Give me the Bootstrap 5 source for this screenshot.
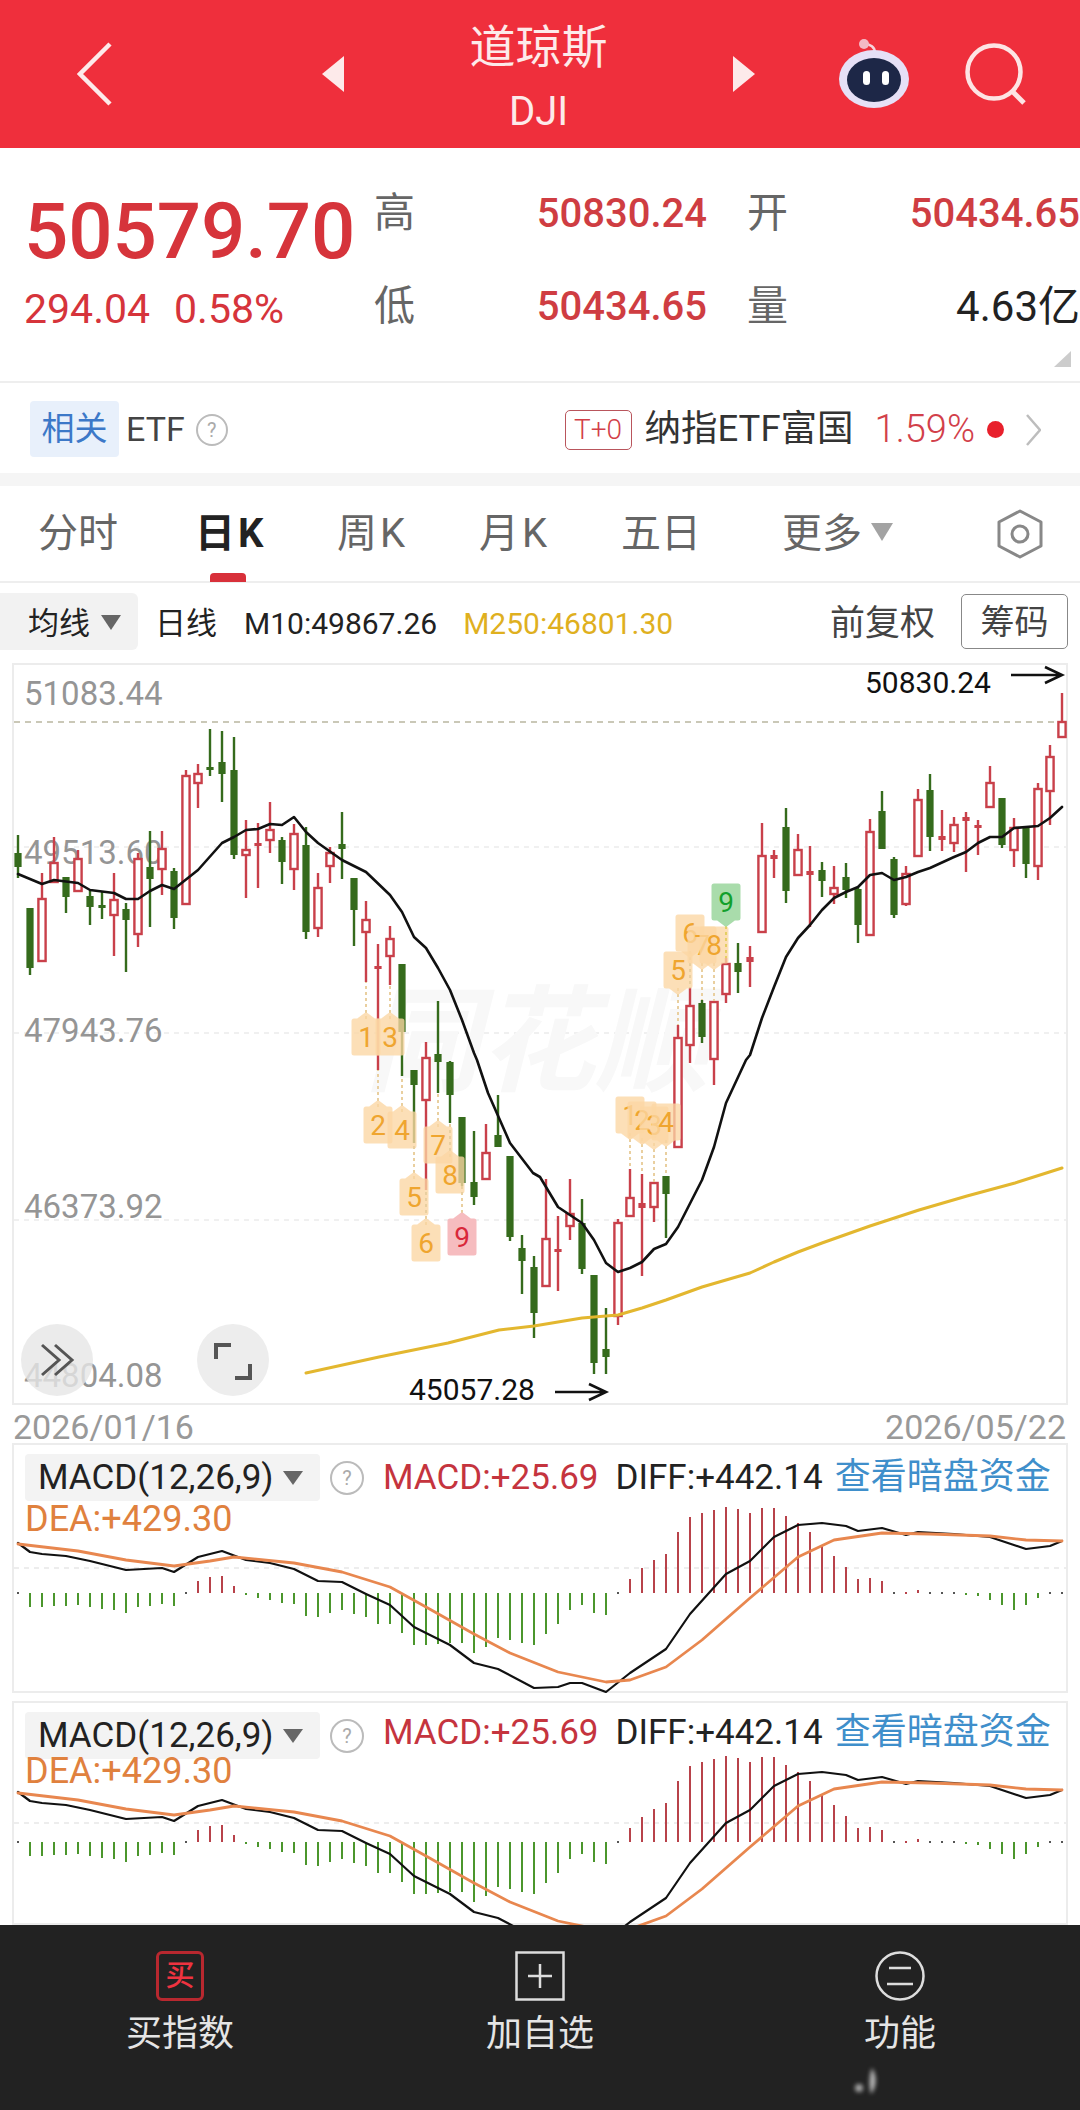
<!DOCTYPE html>
<html lang="zh-CN">
<head>
    <meta charset="UTF-8">
    <title>道琼斯 DJI</title>
    <meta name="viewport" content="width=device-width, initial-scale=1.0"/>
    <link href="https://cdn.jsdelivr.net/npm/bootstrap@5.3.0/dist/css/bootstrap.min.css" rel="stylesheet">
    <script src="https://cdn.jsdelivr.net/npm/bootstrap@5.3.3/dist/js/bootstrap.bundle.min.js"></script>
    <style>
        html, body { margin: 0; background: #fff; }
        body {
            width: 1080px;
            height: 2110px;
            overflow: hidden;
            font-family: Roboto, "Noto Sans CJK SC", sans-serif;
            color: #333;
        }
        .top-bar { height: 148px; background: #ef2f3c; color: #fdeaea; }
        .top-bar svg { flex: none; display: block; }
        .back-ico { margin-left: 77px; }
        .prev-ico { margin-left: 210px; }
        .robot-ico { margin-left: 83px; }
        .search-ico { margin-left: 55px; margin-right: 53px; }
        .title-main { font-size: 46px; line-height: 50px; margin-top: 7px; }
        .title-sub { font-size: 40px; line-height: 44px; margin-top: 18px; }

        .quote-wrap { height: 235px; border-bottom: 2px solid #eee; padding-top: 19px; }
        .price-col { width: 374px; padding-left: 24px; color: #d6343b; }
        .price-big { font-size: 78px; line-height: 92px; font-weight: 500; margin-top: 19px; letter-spacing: -.1px; }
        .price-sub { font-size: 41px; line-height: 46px; margin-top: 8px; }
        .price-sub span + span { margin-left: 24px; }
        .stat-grid {
            display: grid;
            grid-template-columns: 41px 292px 78px 295px;
            grid-auto-rows: 93px;
            align-items: center;
            font-size: 41px;
            color: #666;
            white-space: nowrap;
        }
        .stat-grid .val { text-align: right; color: #cf3d42; font-size: 40px; font-weight: 500; }
        .stat-grid .k2 { padding-left: 40px; }
        .stat-grid .dark { color: #222; font-weight: 400; font-size: 42px; }
        .corner-tri {
            right: 9px;
            bottom: 14px;
            border-style: solid;
            border-width: 0 0 16px 17px;
            border-color: transparent transparent #ccc transparent;
        }

        .etf-row { height: 90px; padding: 3px 39px 0 30px; font-size: 34px; color: #444; }
        .tag-rel {
            width: 89px; height: 56px; margin-right: 7px; margin-top: -2px; border-radius: 4px;
            background: #e8f0fb; color: #3c78c8; font-size: 33px;
        }
        .help-dot {
            width: 32px; height: 32px; border-radius: 50%;
            border: 2px solid #bbb; color: #aaa;
            font-size: 20px; line-height: 1;
        }
        .etf-row .help-dot { margin-left: 11px; }
        .tag-t0 {
            width: 67px; height: 40px; border: 1px solid #b9555c; border-radius: 5px;
            color: #d24048; font-size: 28px; font-weight: 300; margin-right: 13px;
        }
        .etf-name { font-size: 36.5px; color: #333; }
        .etf-pct { font-size: 38px; color: #d2404a; margin-left: 21px; font-weight: 300; }
        .etf-dot { width: 17px; height: 17px; border-radius: 50%; background: #e8202c; margin-left: 12px; }
        .etf-row svg { margin-left: 22px; }
        .gap-band { height: 13px; background: #f5f5f5; }

        .tab-bar { height: 97px; border-bottom: 2px solid #eee; padding-left: 38px; font-size: 40px; color: #666; }
        .tab-item { position: relative; width: 142px; line-height: 96px; white-space: nowrap; }
        .tab-first { width: 157px; }
        .tab-wide { width: 161px; }
        .tab-k { letter-spacing: 3px; }
        .tab-on { font-weight: 700; color: #222; }
        .tab-on::after {
            content: "";
            position: absolute;
            left: 15px; bottom: 0;
            width: 36px; height: 9px;
            border-radius: 4px 4px 0 0;
            background: #d8303a;
        }
        .tri-down {
            display: inline-block;
            border-style: solid;
            border-color: #a3a3a3 transparent transparent transparent;
        }
        .tri-more { border-width: 18px 11px 0 11px; margin-left: 9px; vertical-align: 6px; }

        .tool-bar { height: 80px; padding: 10px 12px 13px 0; font-size: 31px; color: #222; white-space: nowrap; }
        .ma-chip { width: 138px; height: 57px; padding: 5px 0 0 28px; background: #f2f2f2; border-radius: 0 6px 6px 0; }
        .ma-chip .tri-down { border-width: 15px 10px 0 10px; border-top-color: #666; margin-left: 11px; margin-top: -3px; }
        .ma-day { margin-left: 17px; padding-top: 5px; }
        .ma-10 { margin-left: 27px; font-size: 30px; padding-top: 3px; }
        .ma-250 { margin-left: 26px; font-size: 30px; color: #dfb01f; padding-top: 3px; }
        .fq-label { font-size: 35px; color: #444; margin-right: 26px; padding-top: 5px; }
        .chip-btn {
            width: 107px; height: 55px; padding: 0;
            border: 1px solid #888; border-radius: 5px;
            font-size: 34px; line-height: 1; color: #444;
        }

        .chart-box {
            position: relative;
            width: 1056px;
            margin-left: 12px;
            overflow: hidden;
            box-shadow: inset 0 0 0 2px #ececec;
        }
        .chart-box svg { display: block; }
        .main-box { height: 742px; }
        .macd-a { height: 250px; }
        .macd-b { height: 224px; margin-top: 8px; }
        .axis-txt { font-size: 33px; fill: #959595; }
        .mark-txt { font-size: 30px; fill: #111; }
        .seq-txt { font-size: 28px; text-anchor: middle; }
        .wm-txt { font-size: 115px; font-weight: 700; font-style: italic; fill: #f8f8f8; }

        .date-row { height: 38px; padding: 0 14px 0 13px; font-size: 34px; line-height: 44px; color: #999; }

        .macd-legend { position: absolute; left: 13px; top: 11px; right: 0; }
        .macd-head { font-size: 35px; line-height: 47px; height: 47px; white-space: nowrap; }
        .macd-chip { flex: none; width: 295px; height: 47px; padding-left: 13px; background: #f3f3f3; border-radius: 4px; color: #222; }
        .macd-chip .tri-down { border-width: 14px 10px 0 10px; border-top-color: #666; margin-left: 9px; }
        .macd-head .help-dot { flex: none; margin-left: 10px; width: 34px; height: 34px; }
        .v-macd { color: #c5343e; margin-left: 19px; }
        .v-diff { color: #222; margin-left: 17px; }
        .v-link { color: #3f8fcb; font-size: 36px; margin-left: 12px; }
        .v-dea { color: #e0813e; font-size: 36px; line-height: 40px; margin-top: -2px; }
        .macd-b .v-dea { margin-top: -8px; }
        .macd-b .macd-head > span:not(.macd-chip):not(.help-dot) { margin-top: -6px; }

        .foot-bar { position: relative; height: 185px; background: #222; color: #e5e5e5; font-size: 36px; }
        .foot-item { width: 360px; padding-top: 26px; }
        .foot-ico { width: 50px; height: 50px; display: block; }
        .foot-buy {
            width: 48px; height: 50px; border: 3px solid #b8282f; border-radius: 6px;
            color: #ef3340; font-size: 29px; font-weight: 500; line-height: 1;
        }
        .foot-label { line-height: 44px; margin-top: 11px; }
        .foot-mark { position: absolute; left: 855px; top: 143px; filter: blur(2px); }
    </style>
</head>
<body>

<!-- Top bar -->
<header class="top-bar d-flex align-items-center">
    <svg class="back-ico" width="35" height="64" viewBox="0 0 35 64"><path d="M33 2 3 32l30 30" fill="none" stroke="#fdeaea" stroke-width="4.5"/></svg>
    <svg class="prev-ico" width="22" height="36" viewBox="0 0 22 36"><path d="M22 0V36L0 18Z" fill="#fdeaea"/></svg>
    <div class="flex-grow-1 text-center">
        <div class="title-main">道琼斯</div>
        <div class="title-sub">DJI</div>
    </div>
    <svg width="22" height="36" viewBox="0 0 22 36"><path d="M0 0V36L22 18Z" fill="#fdeaea"/></svg>
    <svg class="robot-ico" width="72" height="70" viewBox="0 0 72 70">
        <path d="M37 14C37 8 32 5 27 5" fill="none" stroke="#f6d3dc" stroke-width="2.5"/>
        <circle cx="26" cy="5" r="5" fill="#f3b9c6"/>
        <ellipse cx="36" cy="40" rx="35" ry="29" fill="#e6e0f6"/>
        <ellipse cx="36" cy="41" rx="27" ry="22" fill="#1d2747"/>
        <rect x="25" y="32" width="7" height="14" rx="3.5" fill="#fff"/>
        <rect x="44" y="32" width="7" height="14" rx="3.5" fill="#fff"/>
    </svg>
    <svg class="search-ico" width="62" height="62" viewBox="0 0 62 62"><circle cx="29" cy="29" r="26.5" fill="none" stroke="#fde4e4" stroke-width="4.5"/><path d="M47 48 59 60" stroke="#fde4e4" stroke-width="5"/></svg>
</header>

<!-- Quote -->
<section class="quote-wrap d-flex position-relative">
    <div class="price-col">
        <div class="price-big">50579.70</div>
        <div class="price-sub"><span>294.04</span><span>0.58%</span></div>
    </div>
    <div class="stat-grid">
        <span>高</span><span class="val">50830.24</span><span class="k2">开</span><span class="val">50434.65</span>
        <span>低</span><span class="val">50434.65</span><span class="k2">量</span><span class="val dark">4.63亿</span>
    </div>
    <span class="corner-tri position-absolute"></span>
</section>

<!-- Related ETF -->
<section class="etf-row d-flex align-items-center">
    <span class="tag-rel d-flex align-items-center justify-content-center">相关</span>
    <span>ETF</span>
    <span class="help-dot d-inline-flex align-items-center justify-content-center">?</span>
    <span class="tag-t0 d-flex align-items-center justify-content-center ms-auto">T+0</span>
    <span class="etf-name">纳指ETF富国</span>
    <span class="etf-pct">1.59%</span>
    <span class="etf-dot"></span>
    <svg width="15" height="32" viewBox="0 0 15 32"><path d="M1 1 14 16 1 31" fill="none" stroke="#bdbdbd" stroke-width="2.5"/></svg>
</section>
<div class="gap-band"></div>

<!-- Period tabs -->
<nav class="tab-bar d-flex align-items-start">
    <span class="tab-item tab-first">分时</span>
    <span class="tab-item tab-k tab-on">日K</span>
    <span class="tab-item tab-k">周K</span>
    <span class="tab-item tab-k">月K</span>
    <span class="tab-item tab-wide">五日</span>
    <span class="tab-item">更多<i class="tri-down tri-more"></i></span>
    <svg class="ms-auto" style="margin:23px 36px 0 0" width="48" height="50" viewBox="0 0 48 50"><path d="M24 2 45 13V37L24 48 3 37V13Z" fill="none" stroke="#888" stroke-width="3" stroke-linejoin="round"/><circle cx="24" cy="25" r="8" fill="none" stroke="#888" stroke-width="3"/></svg>
</nav>

<!-- Chart toolbar -->
<div class="tool-bar d-flex align-items-center">
    <span class="ma-chip d-flex align-items-center">均线<i class="tri-down"></i></span>
    <span class="ma-day">日线</span>
    <span class="ma-10">M10:49867.26</span>
    <span class="ma-250">M250:46801.30</span>
    <span class="fq-label ms-auto">前复权</span>
    <button type="button" class="btn chip-btn">筹码</button>
</div>

<!-- Main K chart -->
<div class="chart-box main-box">
    <svg id="klineChart" width="1056" height="742" viewBox="12 663 1056 742" xmlns="http://www.w3.org/2000/svg"></svg>
</div>
<div class="date-row d-flex justify-content-between">
    <span>2026/01/16</span>
    <span>2026/05/22</span>
</div>

<!-- MACD panels -->
<div class="chart-box macd-a">
    <svg id="macdOne" width="1056" height="250" viewBox="12 1443 1056 250" xmlns="http://www.w3.org/2000/svg"></svg>
    <div class="macd-legend">
        <div class="macd-head d-flex align-items-center">
            <span class="macd-chip d-flex align-items-center">MACD(12,26,9)<i class="tri-down"></i></span>
            <span class="help-dot d-inline-flex align-items-center justify-content-center">?</span>
            <span class="v-macd">MACD:+25.69</span>
            <span class="v-diff">DIFF:+442.14</span>
            <span class="v-link">查看暗盘资金</span>
        </div>
        <div class="v-dea">DEA:+429.30</div>
    </div>
</div>
<div class="chart-box macd-b">
    <svg id="macdTwo" width="1056" height="224" viewBox="12 1701 1056 224" xmlns="http://www.w3.org/2000/svg"></svg>
    <div class="macd-legend">
        <div class="macd-head d-flex align-items-center">
            <span class="macd-chip d-flex align-items-center">MACD(12,26,9)<i class="tri-down"></i></span>
            <span class="help-dot d-inline-flex align-items-center justify-content-center">?</span>
            <span class="v-macd">MACD:+25.69</span>
            <span class="v-diff">DIFF:+442.14</span>
            <span class="v-link">查看暗盘资金</span>
        </div>
        <div class="v-dea">DEA:+429.30</div>
    </div>
</div>

<!-- Bottom actions -->
<footer class="foot-bar d-flex">
    <div class="foot-item d-flex flex-column align-items-center">
        <span class="foot-buy d-flex align-items-center justify-content-center">买</span>
        <span class="foot-label">买指数</span>
    </div>
    <div class="foot-item d-flex flex-column align-items-center">
        <svg class="foot-ico" viewBox="0 0 50 50"><rect x="1.5" y="1.5" width="47" height="47" fill="none" stroke="#ddd" stroke-width="2.5"/><path d="M25 13V37M13 25H37" stroke="#ddd" stroke-width="2.5"/></svg>
        <span class="foot-label">加自选</span>
    </div>
    <div class="foot-item d-flex flex-column align-items-center">
        <svg class="foot-ico" viewBox="0 0 50 50"><circle cx="25" cy="25" r="23.5" fill="none" stroke="#ddd" stroke-width="2.5"/><path d="M14 17H36M12 33H38" stroke="#ddd" stroke-width="2.5"/></svg>
        <span class="foot-label">功能</span>
    </div>
    <svg class="foot-mark" width="30" height="28" viewBox="0 0 30 28"><circle cx="4" cy="20" r="4" fill="#aaa"/><path d="M17 0C22 8 22 18 16 26 14 18 14 8 17 0Z" fill="#bbb"/></svg>
</footer>

<script>
    const NS = 'http://www.w3.org/2000/svg';
    const RED = '#c9404a';
    const GREEN = '#356b1c';

    function add(svg, tag, attrs, text) {
        const el = document.createElementNS(NS, tag);
        Object.keys(attrs).forEach(k => el.setAttribute(k, attrs[k]));
        if (text !== undefined) el.textContent = text;
        svg.appendChild(el);
        return el;
    }

    function polyline(svg, pts, color, width) {
        add(svg, 'polyline', {
            points: pts.map(p => p[0].toFixed(1) + ',' + p[1].toFixed(1)).join(' '),
            fill: 'none', stroke: color, 'stroke-width': width,
            'stroke-linejoin': 'round', 'stroke-linecap': 'round'
        });
    }

    // [up?, high, bodyTop, bodyBottom, low], one per trading day, 12px apart
    const candles = [
        [0,835,853,867,878],[0,908,908,968,975],[1,873,898,962,962],[1,837,862,883,883],[0,877,877,897,913],
        [1,850,858,892,892],[0,891,896,907,925],[0,892,905,906,919],[1,873,899,916,956],[0,903,909,920,972],
        [1,853,858,935,947],[0,831,867,879,927],[1,831,848,870,895],[0,868,871,918,929],[1,770,775,905,905],
        [1,764,773,784,808],[0,729,767,769,776],[0,731,762,774,802],[0,737,770,855,859],[1,820,849,856,898],
        [1,823,843,846,888],[1,802,829,841,853],[0,837,840,862,884],[1,824,833,870,890],[0,827,845,932,939],
        [1,873,887,929,937],[1,847,852,867,883],[0,812,844,849,879],[0,878,878,910,946],[1,901,919,933,982],
        [1,944,966,968,1070],[1,926,938,957,985],[0,964,964,1032,1076],[0,1070,1070,1085,1143],[1,1042,1057,1101,1190],
        [0,1001,1054,1062,1093],[0,1061,1062,1095,1123],[0,1117,1117,1183,1186],[0,1131,1182,1197,1205],[1,1124,1152,1180,1180],
        [0,1095,1135,1147,1147],[0,1156,1156,1237,1241],[0,1235,1248,1261,1294],[0,1256,1267,1313,1338],[1,1179,1238,1287,1287],
        [1,1216,1249,1252,1291],[1,1179,1213,1227,1240],[0,1199,1223,1269,1274],[0,1275,1275,1363,1374],[0,1308,1349,1357,1374],
        [1,1219,1222,1317,1325],[1,1169,1197,1217,1217],[1,1174,1203,1208,1276],[1,1182,1182,1208,1222],[0,1176,1176,1194,1238],
        [1,1025,1037,1148,1148],[1,988,1005,1046,1063],[0,1000,1003,1037,1043],[1,1001,1001,1060,1085],[1,958,963,995,1003],
        [0,943,963,972,993],[1,946,957,962,987],[1,823,855,933,933],[1,850,855,859,878],[0,808,827,891,903],
        [1,834,849,876,876],[1,846,871,875,927],[0,862,870,881,897],[1,866,887,895,904],[0,863,877,890,898],
        [0,887,889,925,943],[1,819,831,936,936],[0,791,811,849,849],[0,857,859,915,918],[1,866,873,905,906],
        [1,789,799,857,857],[0,774,790,837,851],[1,810,836,840,851],[1,817,824,844,852],[1,812,817,821,872],
        [1,820,825,828,855],[1,766,782,808,808],[0,798,798,845,848],[1,818,827,851,867],[0,827,827,864,878],
        [1,783,788,867,880],[1,745,756,792,825],[1,693,721,738,738]
    ];

    const ma10 = [[18,874],[42,884],[54,880],[78,883],[90,890],[114,893],[126,899],[138,899],[150,891],[162,885],[174,889],[198,870],[222,843],[234,837],[246,830],[258,829],[270,824],[282,825],[294,817],[306,832],[318,843],[342,860],[366,872],[390,895],[402,912],[414,937],[426,948],[438,968],[450,990],[462,1020],[474,1053],[477,1060],[488,1093],[510,1143],[533,1173],[540,1177],[558,1207],[582,1223],[594,1240],[606,1263],[618,1272],[630,1268],[642,1262],[654,1249],[666,1244],[678,1227],[702,1180],[714,1147],[726,1103],[746,1060],[750,1055],[762,1018],[774,987],[786,957],[798,938],[810,925],[822,910],[834,898],[846,892],[858,887],[870,875],[882,873],[894,880],[906,877],[918,872],[930,868],[954,857],[966,852],[978,843],[990,837],[1002,837],[1014,828],[1038,826],[1050,818],[1062,807]];

    const ma250 = [[306,1373],[379,1357],[448,1343],[499,1330],[534,1326],[582,1318],[618,1315],[642,1308],[666,1300],[702,1287],[750,1273],[774,1262],[798,1252],[822,1243],[870,1226],[919,1210],[967,1196],[1015,1183],[1062,1168]];

    // [label, candle index, badge centre y, up = badge sits above the candle, kind]
    const marks = [
        ['1',29,1037,0],['3',31,1037,0],['2',30,1125,0],['4',32,1130,0],['7',35,1145,0],['8',36,1175,0],
        ['5',33,1197,0],['6',34,1243,0],['9',37,1237,0,'sell'],
        ['1',51,1115,1],['2',52,1120,1],['3',53,1125,1],['4',54,1122,1],
        ['5',55,970,1],['6',56,933,1],['7',57,945,1],['8',58,945,1],['9',59,902,1,'buy']
    ];

    function drawCandle(svg, c, i) {
        const x = 18 + 12 * i;
        const col = c[0] ? RED : GREEN;
        add(svg, 'rect', { x: x - 1.2, y: c[1], width: 2.4, height: c[4] - c[1], fill: col });
        if (c[0] && c[3] - c[2] > 6) {
            add(svg, 'rect', { x: x - 3.6, y: c[2] + 1, width: 7.2, height: c[3] - c[2] - 2, fill: '#fff', stroke: col, 'stroke-width': 2.4 });
        } else {
            add(svg, 'rect', { x: x - 3.6, y: c[2], width: 7.2, height: Math.max(c[3] - c[2], 3), fill: col });
        }
    }

    function drawMark(svg, m) {
        const x = 18 + 12 * m[1];
        const cy = m[2];
        const c = candles[m[1]];
        const kind = m[4];
        const bg = kind === 'sell' ? '#f6bcbf' : kind === 'buy' ? '#a9dcab' : '#fcd7a4';
        const fg = kind === 'sell' ? '#d9283a' : kind === 'buy' ? '#12a02c' : '#efa52f';
        const edge = m[3] ? cy + 18 : cy - 18;
        const end = m[3] ? c[1] : c[4];
        add(svg, 'line', { x1: x, y1: edge, x2: x, y2: end, stroke: kind === 'buy' ? '#e4cf63' : '#e9cf9f', 'stroke-width': 2, 'stroke-dasharray': '3 3' });
        const tip = m[3] ? edge + 4 : edge - 4;
        const group = add(svg, 'g', { opacity: kind ? 1 : 0.78 });
        add(group, 'path', { d: `M${x - 12} ${cy - 16}h24v32h-24zM${x - 8} ${m[3] ? edge - 2 : edge + 2}L${x} ${tip}L${x + 8} ${m[3] ? edge - 2 : edge + 2}Z`, fill: bg, stroke: bg, 'stroke-width': 5, 'stroke-linejoin': 'round' });
        add(svg, 'text', { x: x, y: cy + 10, class: 'seq-txt', fill: fg }, m[0]);
    }

    function arrow(svg, x1, x2, y) {
        add(svg, 'path', { d: `M${x1} ${y}H${x2}M${x2 - 17} ${y - 8}L${x2} ${y}L${x2 - 17} ${y + 8}`, fill: 'none', stroke: '#111', 'stroke-width': 2.6 });
    }

    function drawKline() {
        const svg = document.getElementById('klineChart');
        [847, 1033, 1220].forEach(y => add(svg, 'line', { x1: 14, y1: y, x2: 1066, y2: y, stroke: '#ececec', 'stroke-width': 1.5, 'stroke-dasharray': '5 5' }));
        add(svg, 'line', { x1: 14, y1: 722, x2: 1066, y2: 722, stroke: '#b9b6a0', 'stroke-width': 1.6, 'stroke-dasharray': '6 5' });
        add(svg, 'text', { x: 365, y: 1082, class: 'wm-txt' }, '同花顺');
        [['51083.44', 705], ['49513.60', 864], ['47943.76', 1042], ['46373.92', 1218], ['44804.08', 1387]].forEach(a => {
            add(svg, 'text', { x: 24, y: a[1], class: 'axis-txt' }, a[0]);
        });
        candles.forEach((c, i) => drawCandle(svg, c, i));
        polyline(svg, ma250, '#e3b72f', 3);
        polyline(svg, ma10, '#111', 2.6);
        marks.forEach(m => drawMark(svg, m));

        add(svg, 'text', { x: 865, y: 693, class: 'mark-txt' }, '50830.24');
        arrow(svg, 1011, 1062, 675);
        add(svg, 'text', { x: 409, y: 1400, class: 'mark-txt' }, '45057.28');
        arrow(svg, 555, 606, 1392);

        // round overlay buttons
        add(svg, 'circle', { cx: 57, cy: 1360, r: 36, fill: '#e6e6e6', 'fill-opacity': 0.8 });
        add(svg, 'path', { d: 'M42 1345 59 1360 42 1375M55 1345 72 1360 55 1375', fill: 'none', stroke: '#555', 'stroke-width': 3 });
        add(svg, 'circle', { cx: 233, cy: 1360, r: 36, fill: '#ededed' });
        add(svg, 'path', { d: 'M216 1359V1345H231M235 1378H250V1364', fill: 'none', stroke: '#555', 'stroke-width': 4 });
    }

    // values below are the bar tip and line points on the first panel; the second is the same data, 249px lower
    const histTips = [1593,1607,1607,1606,1606,1605,1607,1609,1610,1613,1607,1606,1604,1606,1593,
        1581,1577,1576,1586,1594,1598,1600,1603,1604,1616,1617,1613,1610,1614,1617,1624,1624,1633,1645,1645,1644,1643,1643,
        1653,1647,1638,1640,1643,1645,1634,1624,1610,1605,1613,1615,1593,1579,1568,1560,1554,1532,1517,1513,1510,1507,1509,
        1513,1508,1508,1516,1523,1532,1546,1556,1567,1579,1578,1581,1593,1592,1590,1593,1593,1593,1595,1596,1600,1605,1610,1605,1598,1593,1593];

    const diffLine = [[18,1543],[30,1552],[42,1554],[66,1556],[90,1561],[126,1570],[162,1568],[174,1572],[198,1557],[222,1551],[246,1560],[270,1563],[294,1569],[318,1581],[342,1582],[366,1594],[390,1605],[414,1627],[450,1645],[474,1663],[498,1669],[534,1688],[558,1687],[570,1683],[582,1683],[606,1692],[630,1673],[666,1649],[690,1614],[726,1574],[750,1561],[774,1537],[798,1525],[822,1523],[846,1526],[858,1531],[882,1528],[906,1535],[918,1532],[954,1534],[990,1537],[1026,1549],[1050,1546],[1062,1541]];

    const deaLine = [[18,1544],[78,1551],[126,1560],[174,1566],[210,1561],[234,1557],[294,1563],[342,1572],[390,1587],[426,1607],[474,1634],[510,1653],[558,1672],[606,1682],[630,1680],[666,1667],[702,1640],[750,1598],[798,1557],[834,1540],[882,1533],[930,1534],[990,1536],[1026,1540],[1062,1541]];

    function drawMacd(id, shift, gridY) {
        const svg = document.getElementById(id);
        add(svg, 'line', { x1: 14, y1: gridY, x2: 1066, y2: gridY, stroke: '#e8e8e8', 'stroke-width': 1.5, 'stroke-dasharray': '5 5' });
        histTips.forEach((tip, i) => {
            const x = 18 + 12 * i;
            const base = 1593 + shift;
            const y = tip + shift;
            const col = y < base ? '#b8424a' : '#4b962c';
            add(svg, 'rect', { x: x - 1, y: Math.min(y, base) - (y === base ? 1 : 0), width: 2, height: Math.max(Math.abs(y - base), 2), fill: y === base ? '#555' : col });
        });
        polyline(svg, diffLine.map(p => [p[0], p[1] + shift]), '#111', 2.2);
        polyline(svg, deaLine.map(p => [p[0], p[1] + shift]), '#e8874f', 2.8);
    }

    drawKline();
    drawMacd('macdOne', 0, 1568);
    drawMacd('macdTwo', 249, 1823);
</script>

</body>
</html>
